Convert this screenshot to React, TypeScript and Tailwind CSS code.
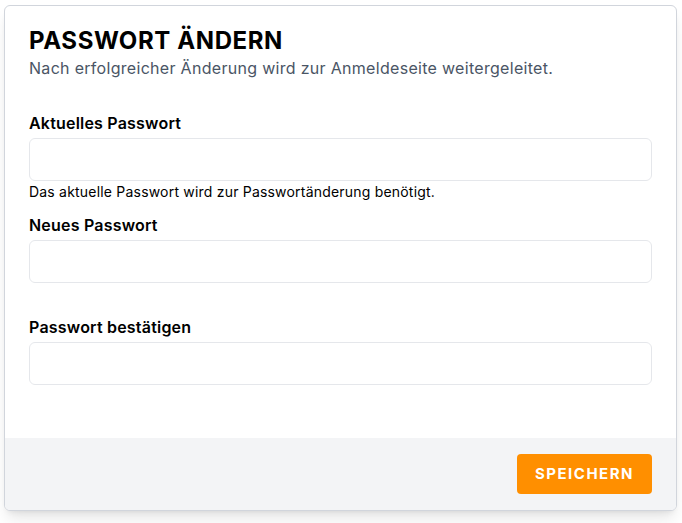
import React from "react";

function Field({
  label,
  help,
}: {
  label: string;
  help?: string;
}) {
  return (
    <div className="flex flex-col">
      <label className="h-[22px] text-[16px] font-semibold leading-[22px] tracking-[0.2px] text-black">
        {label}
      </label>

      <input
        type="password"
        className="
          mt-1
          h-[43px]
          w-full
          rounded-md
          border
          border-gray-200
          bg-white
          px-3
          outline-none
        "
      />

      <p className="h-[20px] pt-[2px] text-[14px] leading-[18px] tracking-[0.2px] text-black">
        {help}
      </p>
    </div>
  );
}

export default function App() {
  return (
    <div
      className="min-h-screen bg-white pl-[4px] pt-[5px]"
      style={{ fontFamily: "Inter, 'Open Sans', sans-serif" }}
    >
      <div
        className="
          w-[673px]
          overflow-hidden
          rounded-md
          border
          border-gray-300
          bg-white
          shadow-lg
        "
      >
        <div className="px-6 pt-5 pb-[33px]">
          <h1 className="text-2xl font-bold uppercase leading-[30px] tracking-[0.025em] text-black">
            Passwort ändern
          </h1>

          <p className="text-[16px] leading-6 tracking-[0.3px] text-gray-600">
            Nach erfolgreicher Änderung wird zur Anmeldeseite weitergeleitet.
          </p>

          <div className="mt-[32px] flex flex-col gap-[13px]">
            <Field
              label="Aktuelles Passwort"
              help="Das aktuelle Passwort wird zur Passwortänderung benötigt."
            />
            <Field label="Neues Passwort" />
            <Field label="Passwort bestätigen" />
          </div>
        </div>

        <div className="flex justify-end bg-gray-100 px-6 py-4">
          <button
            className="
              h-10
              rounded
              bg-[#ff8f00]
              px-[18px]
              text-[15px]
              font-bold
              uppercase
              tracking-widest
              text-white
            "
          >
            Speichern
          </button>
        </div>
      </div>
    </div>
  );
}
